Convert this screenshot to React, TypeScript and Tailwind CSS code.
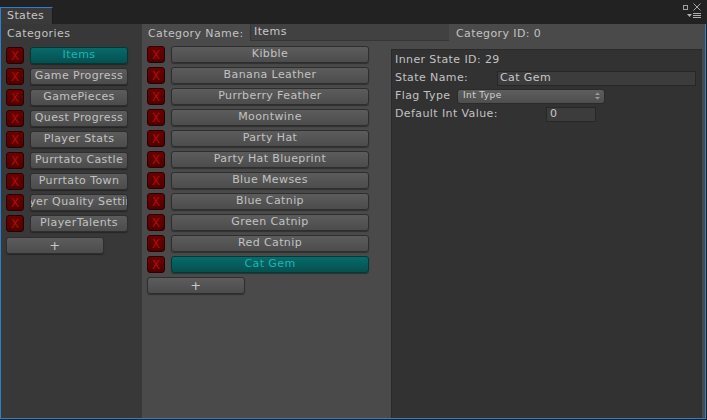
import React from "react";

const categories = [
  "Items",
  "Game Progress",
  "GamePieces",
  "Quest Progress",
  "Player Stats",
  "Purrtato Castle",
  "Purrtato Town",
  "Player Quality Settings",
  "PlayerTalents",
];

const states = [
  "Kibble",
  "Banana Leather",
  "Purrberry Feather",
  "Moontwine",
  "Party Hat",
  "Party Hat Blueprint",
  "Blue Mewses",
  "Blue Catnip",
  "Green Catnip",
  "Red Catnip",
  "Cat Gem",
];

function DeleteBtn() {
  return (
    <div className="w-[18px] h-[17px] shrink-0 rounded-[3px] bg-gradient-to-b from-[#680202] to-[#500000] border border-[#2a0000] flex items-center justify-center text-[12px] leading-none text-[#b80808]">
      X
    </div>
  );
}

function ItemBtn({ label, selected, width }: { label: string; selected?: boolean; width: string }) {
  return (
    <div
      className={
        "h-[17px] rounded-[3px] border flex items-center justify-center overflow-hidden whitespace-nowrap shadow-[0_1px_1px_rgba(0,0,0,0.35)] " +
        width +
        (selected
          ? " bg-gradient-to-b from-[#086a6a] to-[#045050] border-[#033838] text-[#17b6b6]"
          : " bg-gradient-to-b from-[#5c5c5c] to-[#4c4c4c] border-[#2e2e2e] text-[#c2c2c2]")
      }
    >
      <span className="shrink-0">{label}</span>
    </div>
  );
}

function PlusBtn() {
  return (
    <div className="w-[98px] h-[17px] rounded-[3px] border border-[#2e2e2e] bg-gradient-to-b from-[#5c5c5c] to-[#4c4c4c] shadow-[0_1px_1px_rgba(0,0,0,0.35)] flex items-center justify-center text-[13px] leading-none text-[#c8c8c8]">
      +
    </div>
  );
}

export default function App() {
  return (
    <div className="w-[707px] h-[420px] bg-[#222222] flex flex-col font-['DejaVu_Sans',sans-serif] text-[11px] tracking-[0.4px] text-[#c2c2c2]">
      {/* TITLE BAR */}
      <div className="h-[24px] shrink-0 flex items-end justify-between pr-[6px]">
        <div className="w-[53px] h-[17px] bg-[#3a3a3a] border-t border-l border-[#2f7fd0] border-r-[#1c1c1c] border-r flex items-center pl-[6px] text-[#c4c4c4]">
          States
        </div>
        <div className="self-stretch flex flex-col items-end pt-[3px] gap-[2px]">
          <div className="flex items-center gap-[5px]">
            <div className="w-[5px] h-[5px] border border-[#a0a0a0]" />
            <svg width="8" height="8" viewBox="0 0 8 8">
              <path d="M0.5 0.5 L7.5 7.5 M7.5 0.5 L0.5 7.5" stroke="#a8a8a8" strokeWidth="1" />
            </svg>
          </div>
          <svg width="14" height="6" viewBox="0 0 14 6">
            <path d="M0 1 H5 L2.5 4 Z" fill="#b0b0b0" />
            <path d="M6 0.5 H14 M6 2.5 H14 M6 4.5 H14" stroke="#b0b0b0" strokeWidth="1" />
          </svg>
        </div>
      </div>

      {/* WINDOW BODY */}
      <div className="flex-1 flex border-l border-r border-b border-[#2f7fd0] mr-[1px] mb-[1px]">
        {/* CATEGORIES COLUMN */}
        <div className="w-[141px] shrink-0 bg-[#383838] pl-[5px] pt-[2px]">
          <div className="h-[16px] pl-[1px] flex items-center">Categories</div>
          <div className="mt-[5px] flex flex-col gap-[4px]">
            {categories.map((c, i) => (
              <div key={c} className="flex items-center gap-[6px]">
                <DeleteBtn />
                <ItemBtn label={c} selected={i === 0} width="w-[98px]" />
              </div>
            ))}
            <div className="mt-[1px]">
              <PlusBtn />
            </div>
          </div>
        </div>

        {/* MAIN AREA */}
        <div className="flex-1 flex flex-col bg-[#4a4a4a]">
          {/* HEADER ROW */}
          <div className="h-[21px] shrink-0 flex items-center">
            <div className="w-[108px] pl-[6px]">Category Name:</div>
            <div className="w-[199px] h-[17px] self-start bg-[#414141] border-l border-b border-[#363636] flex items-center pl-[3px] text-[#c8c8c8]">
              Items
            </div>
            <div className="pl-[7px]">Category ID: 0</div>
          </div>

          <div className="flex-1 flex">
            {/* STATES LIST */}
            <div className="w-[249px] shrink-0 pl-[5px] pt-[1px] flex flex-col gap-[4px]">
              {states.map((s, i) => (
                <div key={s} className="flex items-center gap-[6px]">
                  <DeleteBtn />
                  <ItemBtn label={s} selected={i === states.length - 1} width="w-[198px]" />
                </div>
              ))}
              <div>
                <PlusBtn />
              </div>
            </div>

            {/* STATE DETAILS */}
            <div className="flex-1 mt-[4px] mr-[3px] bg-[#323232] border-l border-t border-[#2a2a2a] pl-[3px] pt-[1px] flex flex-col">
              <div className="h-[18px] flex items-center">Inner State ID: 29</div>
              <div className="h-[18px] flex items-center">
                <div className="w-[102px]">State Name:</div>
                <div className="w-[199px] h-[15px] bg-[#3c3c3c] border border-[#272727] flex items-center pl-[2px] text-[#c8c8c8]">
                  Cat Gem
                </div>
              </div>
              <div className="h-[18px] flex items-center">
                <div className="w-[62px]">Flag Type</div>
                <div className="w-[148px] h-[15px] rounded-[3px] border border-[#2a2a2a] bg-gradient-to-b from-[#5e5e5e] to-[#4e4e4e] flex items-center justify-between pl-[5px] pr-[4px] text-[9px] text-[#d0d0d0]">
                  <span>Int Type</span>
                  <svg width="5" height="8" viewBox="0 0 5 8">
                    <path d="M0 3 L2.5 0.5 L5 3 Z M0 5 L2.5 7.5 L5 5 Z" fill="#9a9a9a" />
                  </svg>
                </div>
              </div>
              <div className="h-[18px] flex items-center">
                <div className="w-[151px]">Default Int Value:</div>
                <div className="w-[50px] h-[15px] bg-[#3c3c3c] border border-[#272727] flex items-center pl-[3px] text-[#c8c8c8]">
                  0
                </div>
              </div>
            </div>
          </div>
        </div>
      </div>
    </div>
  );
}
